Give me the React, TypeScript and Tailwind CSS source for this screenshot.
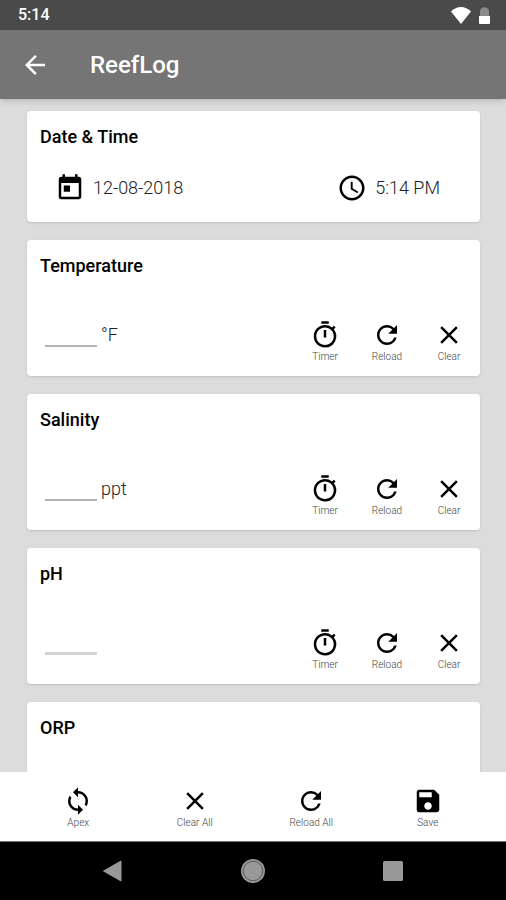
import { useState } from "react";
import type { IconType } from "react-icons";
import {
  MdAccessTime,
  MdArrowBack,
  MdClose,
  MdOutlineTimer,
  MdRefresh,
  MdSave,
  MdSync,
  MdToday,
} from "react-icons/md";

const parameters = [
  { name: "Temperature", unit: "°F", line: "border-b-2 border-[#b4b4b4]" },
  { name: "Salinity", unit: "ppt", line: "border-b-2 border-[#b4b4b4]" },
  { name: "pH", unit: "", line: "border-b-3 border-[#d4d4d4]" },
  { name: "ORP", unit: "", line: "border-b-2 border-[#b4b4b4]" },
];

function IconButton({ icon: Icon, label, className, onClick }: { icon: IconType; label: string; className: string; onClick?: () => void }) {
  return (
    <button type="button" onClick={onClick} className={`flex flex-col items-center gap-px ${className}`}>
      <Icon className="size-[30px] text-black" />
      <span className="text-[10px] leading-3 font-light text-[#444]">{label}</span>
    </button>
  );
}

function StatusBar() {
  return (
    <div className="flex h-[30px] shrink-0 items-center justify-between bg-[#4a4a4a] pr-4 pl-[18px] text-white">
      <span className="text-base leading-5 font-medium">5:14</span>
      <div className="flex items-center gap-2">
        <svg viewBox="0 0 20 17" className="h-[17px] w-5" fill="currentColor">
          <path d="M10 17 0 4.500C3 1.500 6.300 0 10 0s7 1.500 10 4.500z" />
        </svg>
        <svg viewBox="0 0 11 17" className="h-[17px] w-[11px]">
          <path d="M1 9V4q0-2 2-3 2.500-1.500 5 0 2 1 2 3v5z" fill="#8a8a8a" />
          <path d="M0 9h11v7q0 1-1 1H1q-1 0-1-1z" fill="#fff" />
        </svg>
      </div>
    </div>
  );
}

export default function App() {
  const [values, setValues] = useState<Record<string, string>>({});

  const setValue = (name: string, value: string) => {
    setValues({ ...values, [name]: value });
  };

  return (
    <div className="flex h-screen flex-col bg-[#dcdcdc] font-[Roboto,sans-serif]">
      <StatusBar />

      {/* App bar */}
      <header className="z-10 flex h-[69px] shrink-0 items-center gap-10 bg-[#757575] px-5 text-white shadow-md">
        <button type="button" aria-label="Back">
          <MdArrowBack className="size-[30px]" />
        </button>
        <h1 className="text-2xl font-medium">ReefLog</h1>
      </header>

      {/* Entry cards */}
      <main className="min-h-0 flex-1 space-y-[18px] overflow-y-auto py-3 pr-[26px] pl-[27px] [scrollbar-width:none]">
        <section className="rounded bg-white pt-[14px] pb-[19px] shadow">
          <h2 className="px-[13px] text-lg leading-6 font-medium text-black">Date &amp; Time</h2>
          <div className="mt-6 flex justify-between pr-10 pl-7 text-lg leading-6 font-light text-[#222]">
            <button type="button" className="flex items-center gap-2">
              <MdToday className="size-[30px] text-black" />
              12-08-2018
            </button>
            <button type="button" className="flex items-center gap-2">
              <MdAccessTime className="size-[30px] text-black" />
              5:14 PM
            </button>
          </div>
        </section>

        {parameters.map((p) => (
          <section key={p.name} className="rounded bg-white pt-[14px] pb-[13px] shadow">
            <h2 className="px-[13px] text-lg leading-6 font-medium text-black">{p.name}</h2>
            <div className="mt-[42px] flex items-end justify-between pl-[18px]">
              <label className="flex items-end gap-1 pb-4 text-lg leading-6 font-light text-[#222]">
                <input
                  type="text"
                  inputMode="decimal"
                  aria-label={p.name}
                  value={values[p.name] || ""}
                  onChange={(e) => setValue(p.name, e.target.value)}
                  className={`h-[26px] w-[52px] text-center outline-none ${p.line}`}
                />
                {p.unit}
              </label>
              <div className="flex">
                <IconButton icon={MdOutlineTimer} label="Timer" className="w-[62px]" />
                <IconButton icon={MdRefresh} label="Reload" className="w-[62px]" />
                <IconButton icon={MdClose} label="Clear" className="w-[62px]" onClick={() => setValue(p.name, "")} />
              </div>
            </div>
          </section>
        ))}
      </main>

      {/* Bottom actions */}
      <footer className="z-10 flex shrink-0 border-b border-[#777] bg-white px-5 pt-[14px] pb-3">
        <IconButton icon={MdSync} label="Apex" className="flex-1" />
        <IconButton icon={MdClose} label="Clear All" className="flex-1" onClick={() => setValues({})} />
        <IconButton icon={MdRefresh} label="Reload All" className="flex-1" />
        <IconButton icon={MdSave} label="Save" className="flex-1" />
      </footer>

      {/* System navigation */}
      <nav className="flex h-[58px] shrink-0 items-center bg-black px-[43px] text-[#999]">
        <button type="button" aria-label="System back" className="flex flex-1 justify-center">
          <svg viewBox="0 0 20 22" className="h-[22px] w-5" fill="currentColor">
            <path d="M18 1v20L.500 11z" stroke="currentColor" strokeLinejoin="round" />
          </svg>
        </button>
        <button type="button" aria-label="Home" className="flex flex-1 justify-center">
          <svg viewBox="0 0 24 24" className="size-6">
            <circle cx="12" cy="12" r="12" fill="currentColor" />
            <circle cx="12" cy="12" r="9.800" fill="none" stroke="#4a4a4a" strokeWidth="0.800" />
          </svg>
        </button>
        <button type="button" aria-label="Recent apps" className="flex flex-1 justify-center">
          <svg viewBox="0 0 20 20" className="size-5" fill="currentColor">
            <rect width="20" height="20" rx="1.500" />
          </svg>
        </button>
      </nav>
    </div>
  );
}
